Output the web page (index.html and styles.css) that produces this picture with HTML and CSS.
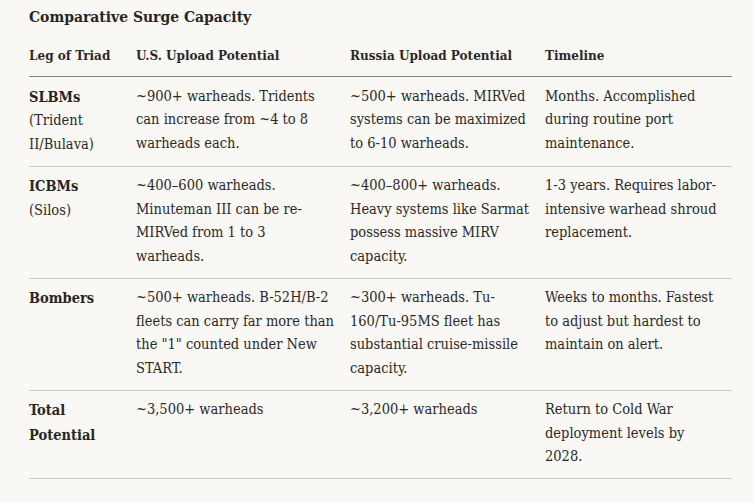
FILE: index.html
```html
<!DOCTYPE html>
<html lang="en">
<head>
<meta charset="utf-8">
<title>Comparative Surge Capacity</title>
<link rel="stylesheet" href="styles.css">
</head>
<body>
<div class="page">
  <h2 class="title">Comparative Surge Capacity</h2>
  <table class="grid">
    <colgroup>
      <col class="c1"><col class="c2"><col class="c3"><col class="c4">
    </colgroup>
    <thead>
      <tr>
        <th>Leg of Triad</th>
        <th>U.S. Upload Potential</th>
        <th>Russia Upload Potential</th>
        <th>Timeline</th>
      </tr>
    </thead>
    <tbody>
      <tr>
        <td><strong>SLBMs</strong> (Trident II/Bulava)</td>
        <td>~900+ warheads. Tridents can increase from ~4 to 8 warheads each.</td>
        <td>~500+ warheads. MIRVed systems can be maximized to 6-10 warheads.</td>
        <td>Months. Accomplished during routine port maintenance.</td>
      </tr>
      <tr>
        <td><strong>ICBMs</strong> (Silos)</td>
        <td>~400–600 warheads. Minuteman III can be re-MIRVed from 1 to 3 warheads.</td>
        <td>~400–800+ warheads. Heavy systems like Sarmat possess massive MIRV capacity.</td>
        <td>1-3 years. Requires labor-intensive warhead shroud replacement.</td>
      </tr>
      <tr>
        <td><strong>Bombers</strong></td>
        <td>~500+ warheads. B-52H/B-2 fleets can carry far more than the "1" counted under New START.</td>
        <td>~300+ warheads. Tu-160/Tu-95MS fleet has substantial cruise-missile capacity.</td>
        <td>Weeks to months. Fastest to adjust but hardest to maintain on alert.</td>
      </tr>
      <tr>
        <td><strong>Total Potential</strong></td>
        <td>~3,500+ warheads</td>
        <td>~3,200+ warheads</td>
        <td>Return to Cold War deployment levels by 2028.</td>
      </tr>
    </tbody>
  </table>
</div>
</body>
</html>
```

FILE: styles.css
```css
html, body {
  margin: 0;
  padding: 0;
  background: #f9f8f5;
}
body {
  font-family: "DejaVu Serif", "Liberation Serif", serif;
  font-stretch: condensed;
  color: #2a2927;
}
.page {
  padding: 6px 21px 0 29px;
}
.title {
  margin: 0 0 8px 0;
  font-size: 15.5px;
  line-height: 21px;
  font-weight: bold;
  color: #262523;
}
.grid {
  width: 703px;
  border-collapse: collapse;
  table-layout: fixed;
  font-size: 14.5px;
  line-height: 23.5px;
}
.c1 { width: 107px; }
.c2 { width: 214px; }
.c3 { width: 195px; }
.c4 { width: 187px; }
.grid th {
  text-align: left;
  font-weight: bold;
  font-size: 13.4px;
  line-height: 24px;
  padding: 8px 14px 9px 0;
  border-bottom: 1px solid #858380;
  vertical-align: top;
}
.grid td {
  padding: 7.5px 14px 9.5px 0;
  border-bottom: 1px solid #cfccc7;
  vertical-align: top;
}
.grid td strong {
  font-weight: bold;
  color: #262523;
}
```
